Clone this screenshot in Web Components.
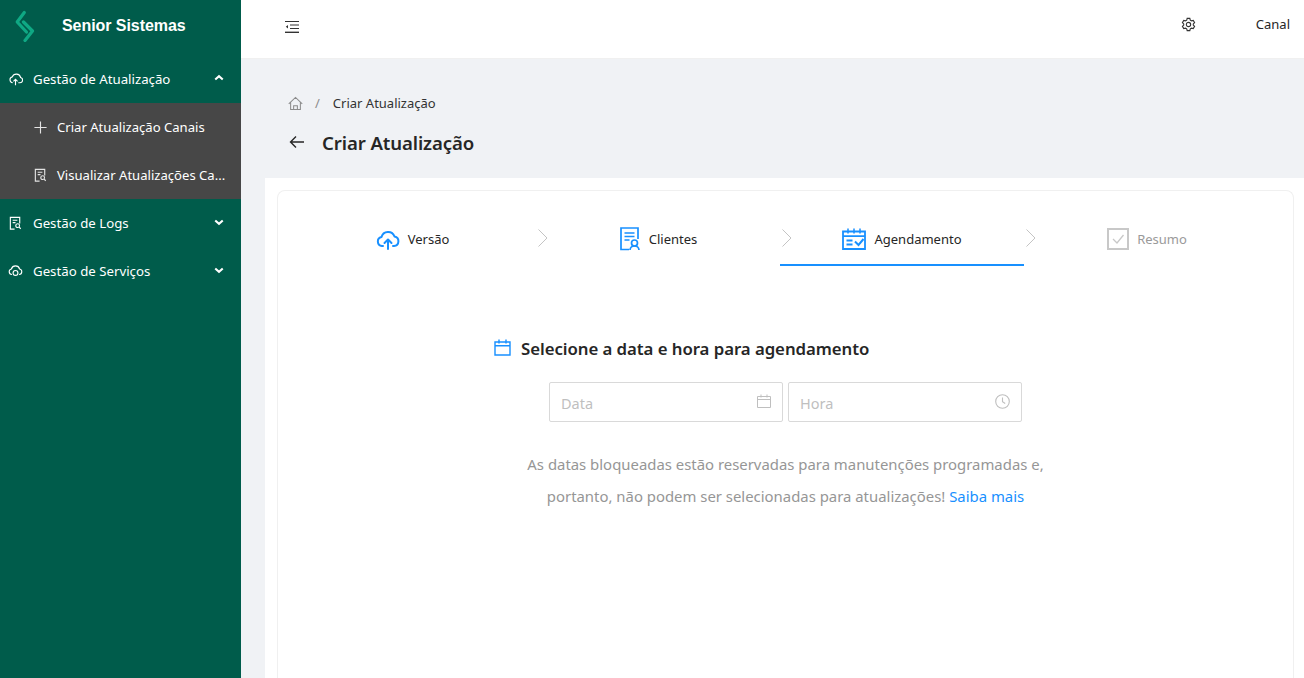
<!DOCTYPE html>
<html lang="pt-BR"><head><meta charset="utf-8"><title>Criar Atualização</title>
<style>
html,body{margin:0;padding:0;height:100%;overflow:hidden}
body{font-family:"Noto Sans","Open Sans",sans-serif;font-size:14px;color:#262626}
</style></head><body>
<app-shell>
  <side-nav slot="nav"></side-nav>
  <top-bar slot="top"></top-bar>
  <page-head slot="head"></page-head>
  <wizard-card slot="card"></wizard-card>
</app-shell>
<script>
const I={
cloud:'<path d="M5 11.5A3.2 3.2 0 0 1 4.600 5.200 4.600 4.600 0 0 1 13.400 5.800 2.900 2.900 0 0 1 12.800 11.500H11"/><path d="M8 14V8M5.800 10 8 7.800 10.200 10"/>',
doc:'<path d="M7 14H2.500V1.500h10V8"/><path d="M5 4.500h5M5 7h3"/><circle cx="10.300" cy="10.300" r="2"/><path d="m11.800 11.800 1.800 1.800"/>',
svc:'<path d="M4.200 11.200H4A3 3 0 0 1 3.600 5.300 4.600 4.600 0 0 1 12.400 5.300 3 3 0 0 1 12 11.200h-.2"/><circle cx="8" cy="9.500" r="2.600"/>',
up:'<path d="m3 10 5-4.500 5 4.500"/>',
down:'<path d="m3 6 5 4.500L13 6"/>'
};
const svg=(p,s=16,vb=16,extra='')=>`<svg width="${s}" height="${s}" viewBox="0 0 ${vb} ${vb}" fill="none" stroke="currentColor" ${extra}>${p}</svg>`;

class AppShell extends HTMLElement{constructor(){super();this.attachShadow({mode:'open'}).innerHTML=`<style>
:host{display:flex;width:1304px;height:678px;overflow:hidden;background:#f0f2f5}
.nav{flex:0 0 241px;width:241px;min-width:0;overflow:hidden}
.main{flex:1;display:flex;flex-direction:column;min-width:0}
.body{flex:1;margin-left:24px;background:#fff;padding:12px 10px 0 12px;min-height:0;display:flex}
</style><div class="nav"><slot name="nav"></slot></div><div class="main"><slot name="top"></slot><slot name="head"></slot><div class="body"><slot name="card"></slot></div></div>`}}

class SideNav extends HTMLElement{constructor(){super();this.attachShadow({mode:'open'}).innerHTML=`<style>
:host{display:block;height:100%;background:#005c4b;color:#fff}
.brand{height:55px;display:flex;align-items:center;box-sizing:border-box;padding:0 0 3px 15px;gap:27px;font:bold 16px "Liberation Sans",Arial,sans-serif;letter-spacing:-.06px}
.brand svg{flex:none}
.sub{background:#474747}
</style>
<div class="brand"><svg width="20" height="32" viewBox="0 0 20 32" fill="none" stroke="#0fa884" stroke-width="3.200" stroke-linecap="round" stroke-linejoin="round"><path d="M9.300 2.500 2.200 12l9.300 10"/><path d="M8.500 12l9 9-7.500 9.500"/></svg><span>Senior Sistemas</span></div>
<nav-item icon="cloud" chev="up" label="Gestão de Atualização"></nav-item>
<div class="sub"><nav-item sub icon="plus" label="Criar Atualização Canais"></nav-item><nav-item sub icon="doc" label="Visualizar Atualizações Ca..."></nav-item></div>
<nav-item icon="doc" chev="down" label="Gestão de Logs"></nav-item>
<nav-item icon="svc" chev="down" label="Gestão de Serviços"></nav-item>`}}

class NavItem extends HTMLElement{connectedCallback(){if(this.shadowRoot)return;
const sub=this.hasAttribute('sub'),ic=this.getAttribute('icon'),ch=this.getAttribute('chev');
const icon=ic==='plus'?svg('<path d="M8 1.500v13M1.500 8h13"/>',15,16,'stroke-width="1.200"'):svg(I[ic],15,16,'stroke-width="1.200"');
this.attachShadow({mode:'open'}).innerHTML=`<style>
:host{display:flex;align-items:center;height:48px;box-sizing:border-box;padding-left:${sub?33:8}px;padding-right:16px;color:#fff;font-size:${sub?13.1:13.25}px;white-space:nowrap}
.i{width:15px;height:15px;flex:none;display:block;margin-right:${sub?9:10}px;color:${sub?'#e4e4e4':'#fff'}}
.i svg{display:block}
.l{flex:1}
.c{width:12px;height:12px;display:flex;margin-top:-3px}
</style><span class="i">${icon}</span><span class="l">${this.getAttribute('label')}</span>${ch?`<span class="c">${svg(I[ch],12,16,'stroke-width="2.800"')}</span>`:''}`}}

class TopBar extends HTMLElement{constructor(){super();this.attachShadow({mode:'open'}).innerHTML=`<style>
:host{display:flex;align-items:center;height:59px;flex:none;box-sizing:border-box;background:#fff;border-bottom:1px solid #f0f0f0;padding:0 14px 0 44px;color:#262626;font-size:13px}
.m{display:block;margin-top:-4px}
.sp{flex:1}
.g{display:block;margin-right:60px;margin-top:-10px}
.t{margin-top:-10px}
</style>
<svg class="m" width="14" height="12" viewBox="0 0 14 12" fill="none" stroke="#333"><path d="M0 .5h14M5 4h9M5 7.500h9"/><path d="M0 11.300h14" stroke-width="1.400"/><path d="M3 4 .8 5.800 3 7.600z" fill="#333" stroke="none"/></svg>
<span class="sp"></span>
<svg class="g" width="15" height="15" viewBox="0 0 16 16" fill="none" stroke="#333" stroke-width="1.200"><path d="M6.600 1.500h2.800l.5 1.900 1.300.7 1.900-.5 1.400 2.400-1.400 1.400v1.200l1.400 1.400-1.400 2.400-1.900-.5-1.300.7-.5 1.900H6.600l-.5-1.900-1.300-.7-1.900.5-1.400-2.400 1.400-1.400V7.400L1.500 6l1.400-2.400 1.900.5 1.300-.7z"/><circle cx="8" cy="8" r="2.300"/></svg>
<span class="t">Canal</span>`}}

class PageHead extends HTMLElement{constructor(){super();this.attachShadow({mode:'open'}).innerHTML=`<style>
:host{display:block;height:119px;flex:none;box-sizing:border-box;padding:33px 0 0 47px}
.c{display:flex;align-items:center;height:22px;font-size:13px;color:#333}
.c svg{display:block;margin-right:12px}
.s{color:#8c8c8c;margin-right:13px}
.t{display:flex;align-items:center;margin-top:13px;height:30px;font-size:18.600px;font-weight:600;color:#262626;letter-spacing:-.1px}
.t svg{display:block;margin:0 17px 0 1px}
</style>
<div class="c"><svg width="15" height="15" viewBox="0 0 16 16" fill="none" stroke="#8c8c8c" stroke-width="1.100"><path d="M.8 8.300 8 1.500l7.200 6.800M2.800 7v7.500h10.400V7M6 14.500v-4.200h4v4.200"/></svg><span class="s">/</span><span>Criar Atualização</span></div>
<div class="t"><svg width="16" height="16" viewBox="0 0 16 16" fill="none" stroke="#262626" stroke-width="1.400"><path d="M15 8H1.500M7 2.500 1.500 8 7 13.500"/></svg><span>Criar Atualização</span></div>`}}

class WizardStep extends HTMLElement{connectedCallback(){if(this.shadowRoot)return;
const act=this.hasAttribute('active'),off=this.hasAttribute('disabled'),first=this.hasAttribute('first');
this.attachShadow({mode:'open'}).innerHTML=`<style>
:host{flex:0 0 244px;display:flex;position:relative;align-items:center;justify-content:center;gap:8px;height:75px;box-sizing:border-box;padding:22px ${first?3:0}px 0 ${off?2:0}px;border-bottom:2px solid ${act?'#1890ff':'transparent'};font-size:13px;color:${off?'#9a9a9a':'#262626'}}
::slotted(svg){display:block}
.ch{position:absolute;left:1px;top:37px;display:${first?'none':'block'}}
</style>
<svg class="ch" width="12" height="20" viewBox="0 0 12 20" fill="none" stroke="#c4c4c4"><path d="m1.500 1.500 8.500 8.500-8.500 8.500"/></svg>
<slot name="icon"></slot><span>${this.getAttribute('label')}</span>`;
}}

class PickerField extends HTMLElement{connectedCallback(){if(this.shadowRoot)return;
this.attachShadow({mode:'open'}).innerHTML=`<style>
:host{display:flex;align-items:center;flex:none;width:234px;height:40px;box-sizing:border-box;border:1px solid #d9d9d9;border-radius:2px;padding:0 11px;background:#fff}
.p{flex:1;font-size:14.500px;color:#bfbfbf;padding-top:2px}
::slotted(svg){display:block;margin-top:-2px}
</style><span class="p">${this.getAttribute('placeholder')}</span><slot></slot>`}}

class WizardCard extends HTMLElement{constructor(){super();this.attachShadow({mode:'open'}).innerHTML=`<style>
:host{display:block;flex:1;box-sizing:border-box;background:#fff;border:1px solid #f0f0f0;border-bottom:0;border-radius:8px 8px 0 0;padding:0 25px 0 14px}
.steps{display:flex;height:75px}
.sel{width:583px;margin:67px 0 0 202px;display:flex;flex-direction:column}
h2{margin:0;display:flex;align-items:center;font-size:16.800px;font-weight:600;color:#262626;height:30px;letter-spacing:-.05px}
h2 svg{display:block;margin-right:10px;margin-top:-2px}
.row{display:flex;gap:5px;margin:19px 0 0 55px}
.note{margin:26px 0 0;font-size:14.900px;line-height:32px;color:#969696;text-align:center}
a{color:#1890ff;text-decoration:none}
</style>
<div class="steps">
<wizard-step first label="Versão"><svg slot="icon" width="24" height="24" viewBox="0 0 24 24" fill="none" stroke="#1890ff" stroke-width="2" stroke-linecap="round" stroke-linejoin="round"><path d="M7 19H6A4.500 4.500 0 0 1 5.500 10.100 6.800 6.800 0 0 1 18.500 9.500 4.800 4.800 0 0 1 18 19h-1"/><path d="M12 22v-9M8.500 16 12 12.500 15.500 16"/></svg></wizard-step>
<wizard-step label="Clientes"><svg slot="icon" width="22" height="24" viewBox="0 0 22 24" fill="none" stroke="#1890ff" stroke-width="1.700"><path d="M10 22.500H2V1h17v11"/><path d="M5.500 6h10M5.500 9.500h10M5.500 13h5"/><circle cx="15.500" cy="16" r="3"/><path d="M11 23c.3-3 2-4 4.500-4s4.200 1 4.500 4"/></svg></wizard-step>
<wizard-step active label="Agendamento"><svg slot="icon" width="24" height="22" viewBox="0 0 24 22" fill="none" stroke="#1890ff" stroke-width="1.800"><path d="M1 3.500h22v17.500H1zM1 8.200h22"/><path d="M6 .5v5M12 .5v5M18 .5v5" stroke-width="1.500"/><path d="M4.500 12.500h6M4.500 16.500h6"/><path d="m13 13.500 3.500 3.500 5-6" stroke-width="2"/></svg></wizard-step>
<wizard-step disabled label="Resumo"><svg slot="icon" width="22" height="22" viewBox="0 0 22 22" fill="none" stroke="#c8c8c8"><path d="M1 1h20v20H1z" stroke-width="2"/><path d="m6 11 4 4 6.500-8" stroke-width="1.300"/></svg></wizard-step>
</div>
<div class="sel">
<h2><svg width="17" height="17" viewBox="0 0 17 17" fill="none" stroke="#1890ff" stroke-width="1.400"><path d="M1 3h15v13H1zM1 6.800h15M5 .5v4M12 .5v4"/></svg><span>Selecione a data e hora para agendamento</span></h2>
<div class="row">
<picker-field placeholder="Data"><svg width="14" height="14" viewBox="0 0 14 14" fill="none" stroke="#bfbfbf"><path d="M.5 2.500h13v11H.5zM.5 5.500h13M4 .5v3M10 .5v3"/></svg></picker-field>
<picker-field placeholder="Hora"><svg width="15" height="15" viewBox="0 0 15 15" fill="none" stroke="#bfbfbf" stroke-width="1.100"><circle cx="7.500" cy="7.500" r="6.800"/><path d="M7.500 3.500v4.200l2.700 1.800"/></svg></picker-field>
</div>
<p class="note">As datas bloqueadas estão reservadas para manutenções programadas e,<br>portanto, não podem ser selecionadas para atualizações! <a href="#">Saiba mais</a></p>
</div>`}}

customElements.define('app-shell',AppShell);
customElements.define('side-nav',SideNav);
customElements.define('nav-item',NavItem);
customElements.define('top-bar',TopBar);
customElements.define('page-head',PageHead);
customElements.define('wizard-step',WizardStep);
customElements.define('picker-field',PickerField);
customElements.define('wizard-card',WizardCard);
</script></body></html>
